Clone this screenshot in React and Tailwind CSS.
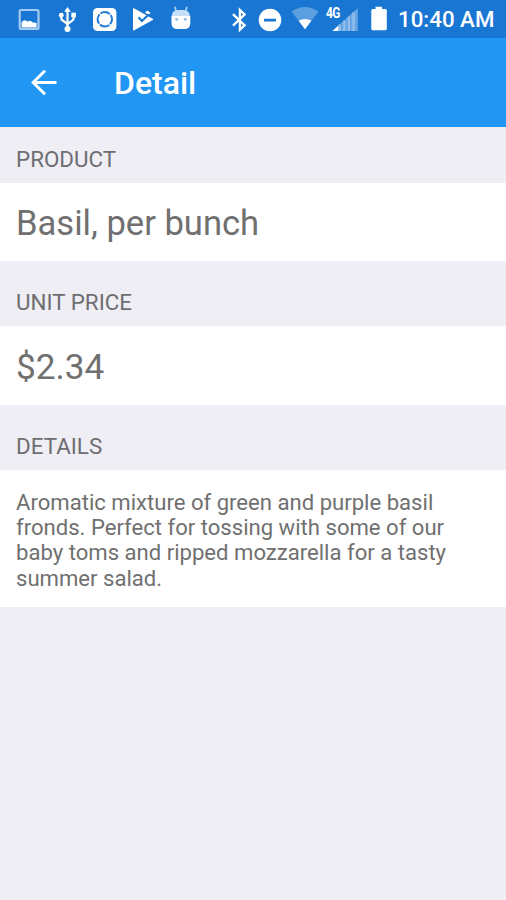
const FONT = "font-[Roboto,'Noto_Sans',sans-serif]";

function ImageIcon() {
  return (
    <svg className="ml-[18px] h-[38px] w-[22px] shrink-0" viewBox="18 0 22 38">
      <rect x="19.700" y="10" width="18.800" height="19" rx="1.500" fill="none" stroke="#a6cbf2" strokeWidth="2.200" />
      <path d="M21.600 27.500V22.200q1.400-2 3.200-2 1.800.2 2.600 1.600 1.500-1.300 3-.9 1.500.4 2.200 1.700 2.200-.6 4 .5V27.500z" fill="#fff" />
    </svg>
  );
}

function UsbIcon() {
  return (
    <svg className="ml-[17px] h-[38px] w-[22px] shrink-0" viewBox="57 0 22 38">
      <g fill="none" stroke="#fff" strokeWidth="2.200">
        <path d="M67.500 11v18" />
        <path d="M61.300 15v3.400q0 1.600 1.600 2.200L67.500 24" />
        <path d="M73.600 15v3.600q0 1.400-1.400 2L67.500 24" />
      </g>
      <path d="M67.500 7l3.400 4.800h-6.800z" fill="#fff" />
      <circle cx="61.300" cy="15.200" r="2.400" fill="#fff" />
      <rect x="71.300" y="12.700" width="4.600" height="4.600" fill="#fff" />
      <circle cx="67.500" cy="29" r="3" fill="#fff" />
    </svg>
  );
}

function SyncIcon() {
  return (
    <svg className="ml-[13px] h-[38px] w-[26px] shrink-0" viewBox="92 0 26 38">
      <rect x="93" y="8" width="23.400" height="23" rx="4.500" fill="#fff" />
      <circle cx="104.800" cy="19.300" r="7.200" fill="none" stroke="#2279d6" strokeWidth="2" strokeDasharray="10.2 1.11" strokeDashoffset="4.9" />
    </svg>
  );
}

function PlayCheckIcon() {
  return (
    <svg className="ml-[14px] h-[38px] w-[23px] shrink-0" viewBox="132 0 23 38">
      <path d="M133 9.200q0-1.400 1.300-.7l18.400 10.200q1.200.7 0 1.300l-18.400 10.200q-1.300.7-1.300-.7z" fill="#fff" />
      <path d="M145 12.500l2.500-2 3 2.500-2 2z" fill="#fff" />
      <path d="M138.600 17.200l3.300 3.800L149 14.300" fill="none" stroke="#1976d2" strokeWidth="2.200" />
    </svg>
  );
}

function AndroidIcon() {
  return (
    <svg className="ml-[15px] h-[38px] w-[22px] shrink-0" viewBox="170 0 22 38">
      <path d="M174.900 6.800l1.100 4M186.900 6.800l-1.100 4" stroke="#a9cdf2" strokeWidth="1.800" fill="none" />
      <path d="M171.800 16.500q0-6.500 6-6.500h6q6 0 6 6.500z" fill="#c5def7" />
      <path d="M171.500 16h18.800V23q0 6-6 6h-6.800q-6 0-6-6z" fill="#fff" />
      <circle cx="176.600" cy="19.300" r="1.500" fill="#8fbdec" />
      <circle cx="185.300" cy="19.300" r="1.500" fill="#8fbdec" />
    </svg>
  );
}

function BluetoothIcon() {
  return (
    <svg className="ml-[39px] h-[38px] w-[18px] shrink-0" viewBox="231 0 18 38">
      <path d="M233 14.200l11.600 11.100-4.700 4.500V10l4.700 4.500L233 25.600" fill="none" stroke="#fff" strokeWidth="2.300" />
    </svg>
  );
}

function DoNotDisturbIcon() {
  return (
    <svg className="ml-[9px] h-[38px] w-[24px] shrink-0" viewBox="258 0 24 38">
      <circle cx="270" cy="20" r="11.300" fill="#fff" />
      <rect x="264" y="18.700" width="12" height="2.800" rx=".5" fill="#1976d2" />
    </svg>
  );
}

function WifiIcon() {
  return (
    <svg className="ml-[9px] h-[38px] w-[28px] shrink-0" viewBox="291 0 28 38">
      <path d="M291.500 11.500q13.500-9 27 0L305 29.300z" fill="#5b9fe1" />
      <path d="M298.600 20.700q6.400-3.500 12.800 0L305 29.300z" fill="#fff" />
    </svg>
  );
}

function SignalIcon() {
  return (
    <div className="relative ml-[6px] h-[38px] w-[35px] shrink-0">
      <svg className="h-[38px] w-[35px]" viewBox="325 0 35 38">
        <path d="M332.500 31L358 8v23z" fill="#5b9fe1" />
        <path d="M332.500 31l6-5.500V31z" fill="#fff" />
        <path d="M339.700 24.600V31M344.300 20.500V31M348.900 16.500V31M353.500 12.300V31" stroke="#93c0ee" strokeWidth="2.400" />
        <path d="M342 22V31M346.600 18V31M351.200 14V31M355.800 10V31" stroke="#69a7e5" strokeWidth="1.500" />
      </svg>
      <span className="absolute left-px top-[6px] origin-left scale-x-[0.85] text-[14px] font-bold leading-[14px] tracking-[-0.8px] text-white">4G</span>
    </div>
  );
}

function BatteryIcon() {
  return (
    <svg className="ml-[10px] h-[38px] w-[18px] shrink-0" viewBox="370 0 18 38">
      <path d="M375.500 6.800h6.500v2.200h3.300q1.500 0 1.500 1.500v18.200q0 1.500-1.500 1.500h-12.500q-1.500 0-1.500-1.500V10.500q0-1.500 1.500-1.500h2.700z" fill="#fff" />
    </svg>
  );
}

function StatusBar() {
  return (
    <div className="flex h-[38px] items-center bg-[#1976d2]">
      <ImageIcon />
      <UsbIcon />
      <SyncIcon />
      <PlayCheckIcon />
      <AndroidIcon />
      <BluetoothIcon />
      <DoNotDisturbIcon />
      <WifiIcon />
      <SignalIcon />
      <BatteryIcon />
      <span className="ml-[10px] whitespace-nowrap text-[22.300px] font-medium leading-[26px] text-white">10:40 AM</span>
    </div>
  );
}

function AppBar() {
  return (
    <header className="flex h-[89px] items-center bg-[#2196f3] text-white">
      <svg className="ml-[31px] h-[26px] w-[26px] shrink-0" viewBox="0 0 26 26" fill="none" stroke="currentColor" strokeWidth="3">
        <path d="M25.500 12.500H3M14 .7L2.200 12.500 14 24.300" />
      </svg>
      <h1 className="ml-[57px] text-[32px] font-medium leading-[38px]">Detail</h1>
    </header>
  );
}

function SectionTitle({ className, children }) {
  return (
    <h2 className={`flex items-end pb-[11px] pl-[16px] text-[22.400px] leading-[26px] text-[#6d6d72] ${className}`}>{children}</h2>
  );
}

export default function App() {
  return (
    <div className={`h-[900px] w-[506px] overflow-hidden bg-[#efeef4] ${FONT}`}>
      <StatusBar />
      <AppBar />
      <SectionTitle className="h-[56px]">PRODUCT</SectionTitle>
      <p className="flex h-[78px] items-center bg-white pl-[16px] pt-[2px] text-[34.600px] leading-[40px] text-[#707070]">Basil, per bunch</p>
      <SectionTitle className="h-[65px]">UNIT PRICE</SectionTitle>
      <p className="flex h-[79px] items-center bg-white pl-[16px] pt-[3px] text-[35.200px] leading-[40px] text-[#707070]">$2.34</p>
      <SectionTitle className="h-[65px]">DETAILS</SectionTitle>
      <p className="h-[137px] bg-white pl-[16px] pt-[20px] text-[22.100px] leading-[25.200px] text-[#707070]">
        Aromatic mixture of green and purple basil
        <br />
        fronds. Perfect for tossing with some of our
        <br />
        baby toms and ripped mozzarella for a tasty
        <br />
        summer salad.
      </p>
    </div>
  );
}
